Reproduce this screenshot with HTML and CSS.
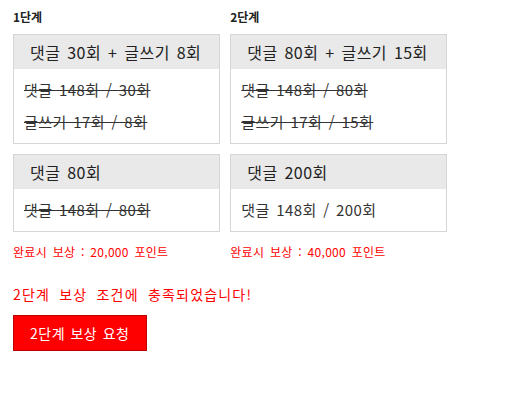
FILE: index.html
```html
<!DOCTYPE html>
<html lang="ko">
<head>
<meta charset="utf-8">
<title>단계별 보상</title>
<link rel="stylesheet" href="styles.css">
</head>
<body>
<div class="page">
  <div class="stages">
    <div class="stage">
      <div class="stage-title">1단계</div>
      <div class="box">
        <div class="box-head">댓글 30회 + 글쓰기 8회</div>
        <div class="box-body">
          <div class="line done">댓글 148회 / 30회</div>
          <div class="line done">글쓰기 17회 / 8회</div>
        </div>
      </div>
      <div class="box">
        <div class="box-head">댓글 80회</div>
        <div class="box-body">
          <div class="line done">댓글 148회 / 80회</div>
        </div>
      </div>
      <div class="reward">완료시 보상 : 20,000 포인트</div>
    </div>
    <div class="stage">
      <div class="stage-title">2단계</div>
      <div class="box">
        <div class="box-head">댓글 80회 + 글쓰기 15회</div>
        <div class="box-body">
          <div class="line done">댓글 148회 / 80회</div>
          <div class="line done">글쓰기 17회 / 15회</div>
        </div>
      </div>
      <div class="box">
        <div class="box-head">댓글 200회</div>
        <div class="box-body">
          <div class="line">댓글 148회 / 200회</div>
        </div>
      </div>
      <div class="reward">완료시 보상 : 40,000 포인트</div>
    </div>
  </div>
  <p class="notice">2단계 보상 조건에 충족되었습니다!</p>
  <button class="claim" type="button">2단계 보상 요청</button>
</div>
</body>
</html>
```
FILE: styles.css
```css
body {
  margin: 0;
  background: #fff;
  font-family: "Noto Sans CJK KR", "Noto Sans", sans-serif;
  color: #333;
}

.page {
  padding: 8px 13px;
}

.stages {
  display: flex;
  align-items: flex-start;
  gap: 10px;
}

.stage {
  display: flex;
  flex-direction: column;
}

.stage-title {
  font-size: 12px;
  font-weight: bold;
  line-height: 18px;
  color: #222;
  margin-bottom: 8px;
}

.box {
  border: 1px solid #d6d6d6;
  margin-bottom: 10px;
}

.box-head {
  background: #e9e9e9;
  height: 34px;
  line-height: 34px;
  padding: 0 18px 0 16px;
  font-size: 16px;
  letter-spacing: 0.45px;
  word-spacing: 2px;
  color: #222;
  white-space: nowrap;
}

.box-body {
  padding: 5px 10px;
}

.line {
  font-size: 15px;
  line-height: 32px;
  letter-spacing: 0.4px;
  word-spacing: 2px;
  color: #333;
  white-space: nowrap;
}

.line.done {
  text-decoration: line-through;
}

.reward {
  margin-top: 2px;
  font-size: 12px;
  line-height: 16px;
  letter-spacing: 0.3px;
  word-spacing: 2px;
  color: #f00;
}

.notice {
  margin: 24px 0 11px;
  font-size: 14px;
  line-height: 20px;
  letter-spacing: 1.2px;
  word-spacing: 4px;
  color: #f00;
}

.claim {
  display: block;
  height: 36px;
  padding: 0 17px 0 16px;
  background: #f00;
  border: 1px solid #b00;
  color: #fff;
  font-family: inherit;
  font-size: 14px;
  letter-spacing: 0.5px;
  word-spacing: 1px;
  cursor: pointer;
}
```
